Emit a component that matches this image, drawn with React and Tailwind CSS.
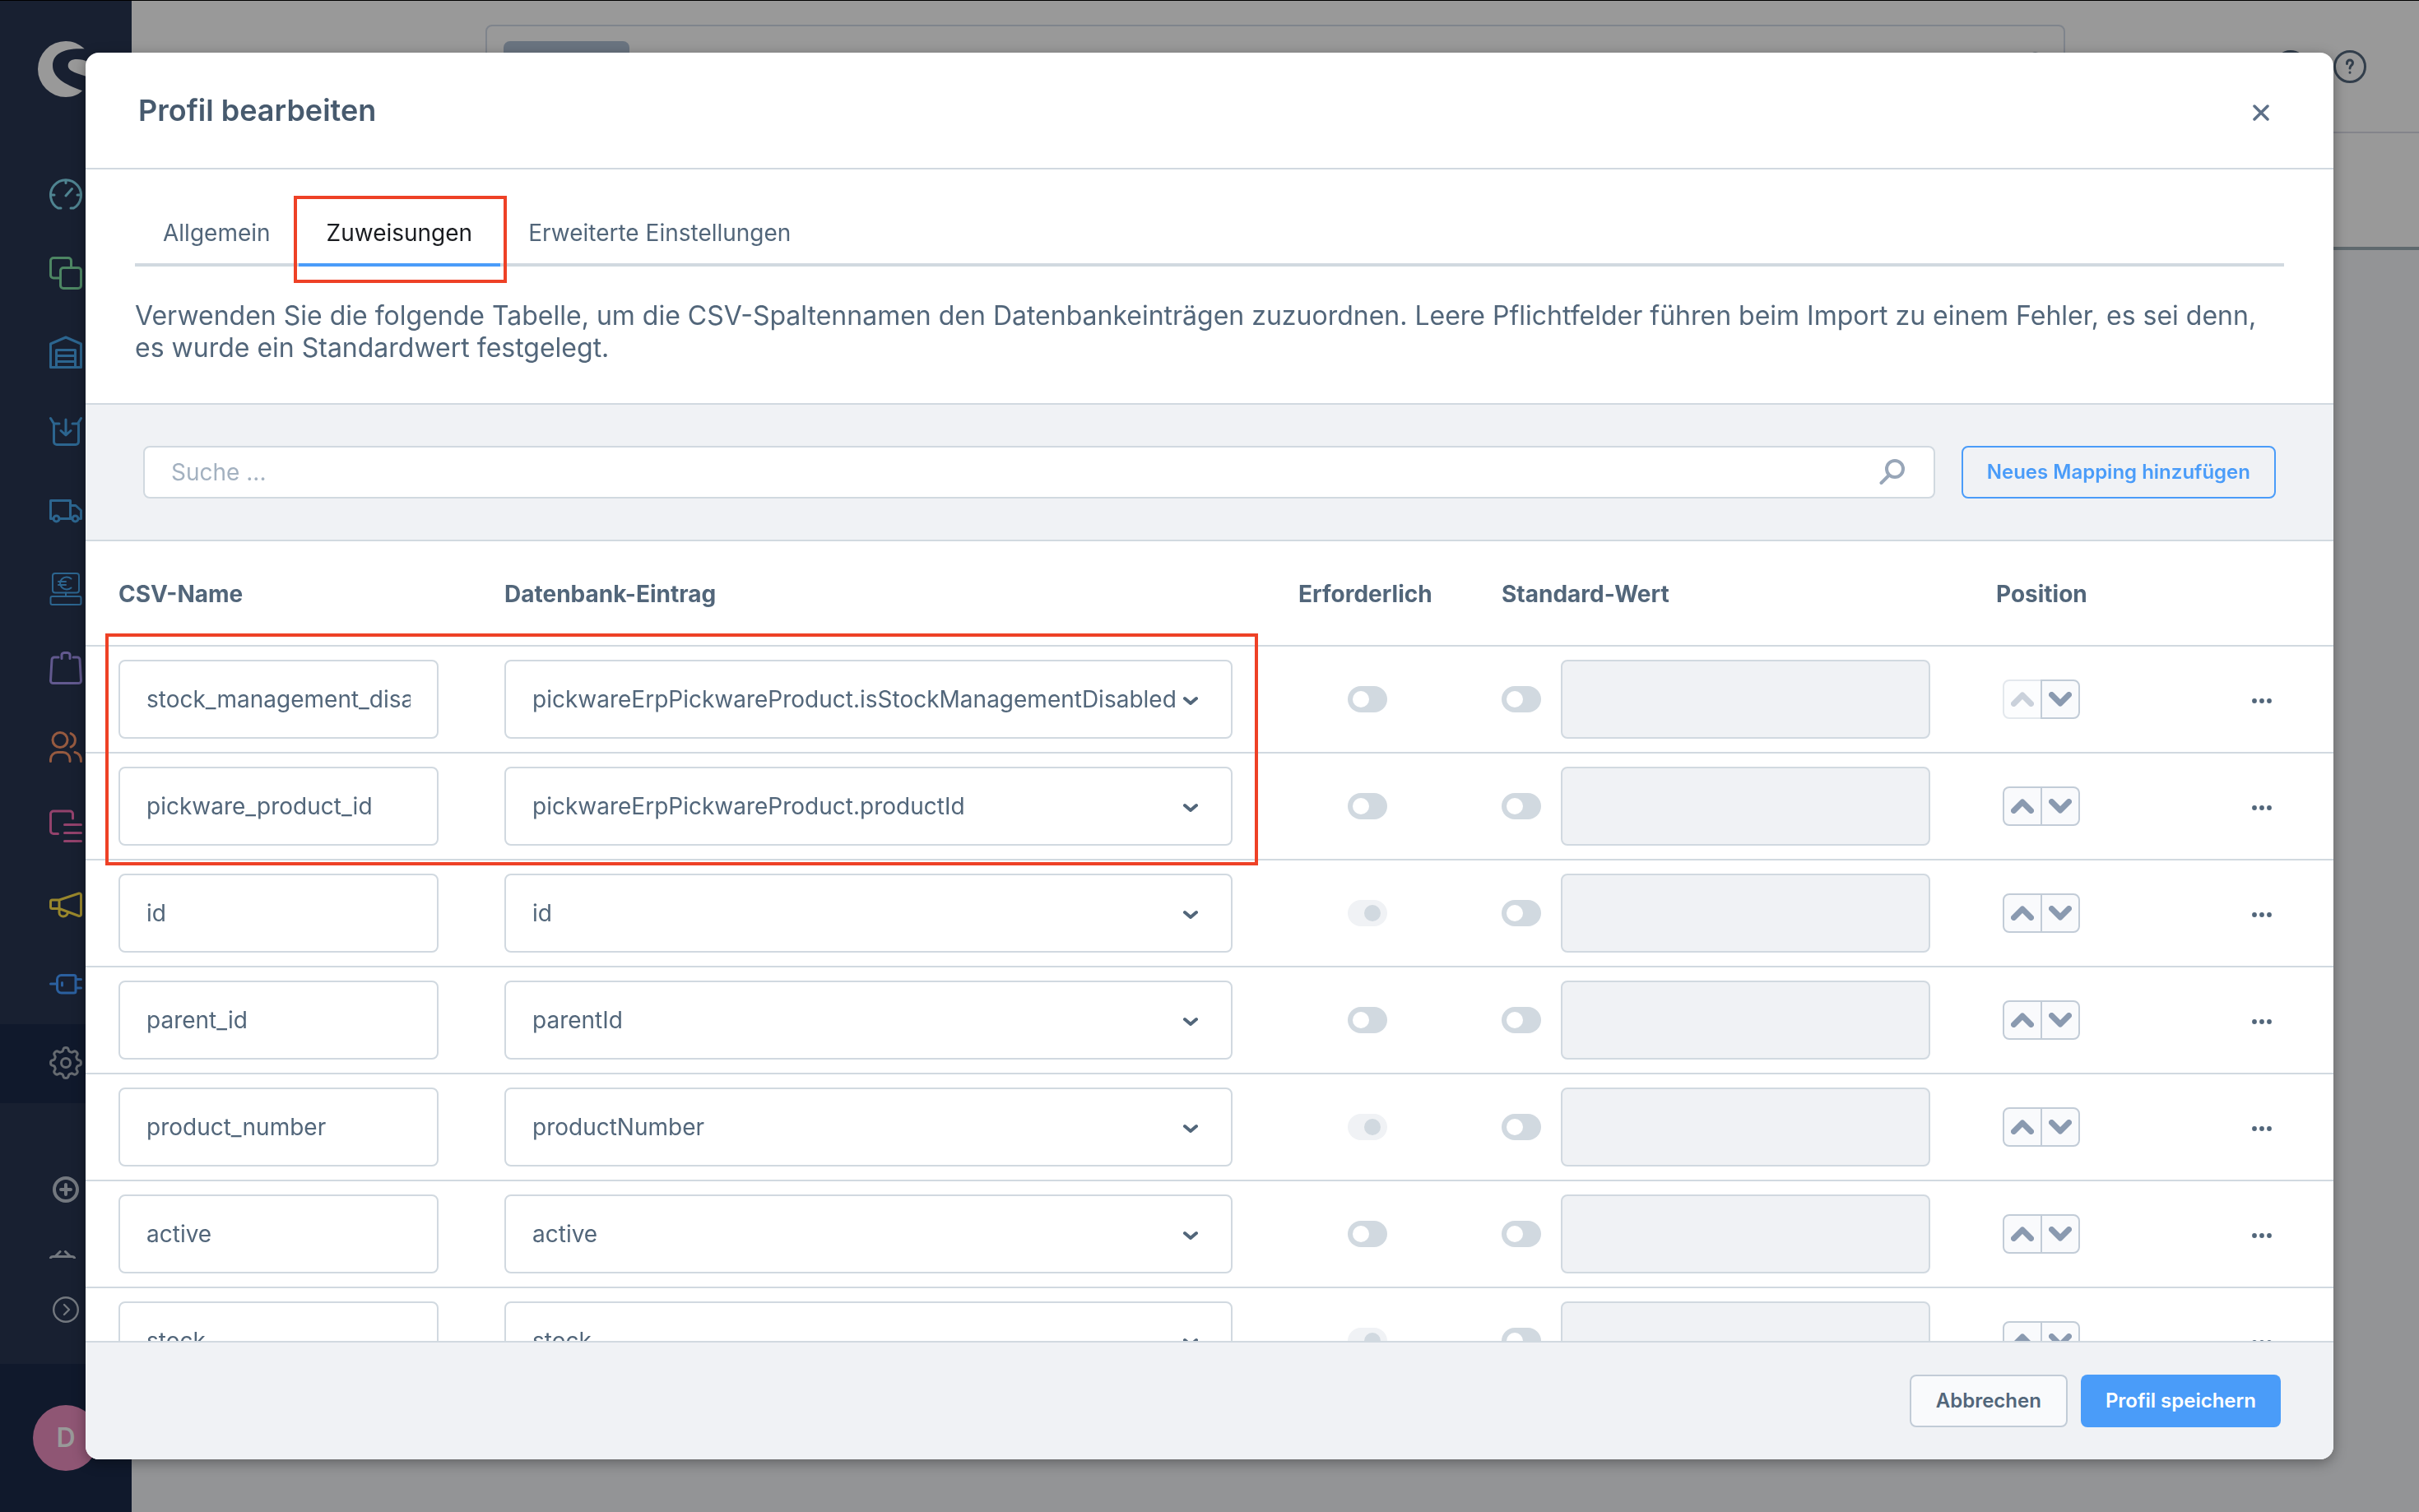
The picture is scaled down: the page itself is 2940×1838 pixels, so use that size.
import React from "react";

const rows = [
  { csv: "stock_management_disabled", db: "pickwareErpPickwareProduct.isStockManagementDisabled", required: false },
  { csv: "pickware_product_id", db: "pickwareErpPickwareProduct.productId", required: false },
  { csv: "id", db: "id", required: true },
  { csv: "parent_id", db: "parentId", required: false },
  { csv: "product_number", db: "productNumber", required: true },
  { csv: "active", db: "active", required: false },
  { csv: "stock", db: "stock", required: true },
];

// Outline of a cog with eight soft teeth, centred in a 40 by 40 box.
const gearPath =
  "M" +
  Array.from({ length: 160 }, (_, i) => {
    const a = (i / 160) * Math.PI * 2;
    const r = 16.4 + 2.1 * Math.tanh(2 * Math.cos(8 * a));
    return `${(20 + r * Math.sin(a)).toFixed(2)} ${(20 - r * Math.cos(a)).toFixed(2)}`;
  }).join("L") +
  "Z";

const navItems = [
  {
    label: "Dashboard",
    color: "text-[#4f8491]",
    icon: <path d="M14 37H10.5A18.5 18.5 0 1 1 29.5 37H26M20 3V6.5M2 21H6M34 21H38M20 22L27.5 13.5" />,
  },
  {
    label: "Kataloge",
    color: "text-[#4d8663]",
    icon: (
      <>
        <path d="M26.5 12V5A3.5 3.5 0 0 0 23 1.5H5A3.5 3.5 0 0 0 1.5 5V22.5A3.5 3.5 0 0 0 5 26H12" />
        <rect x="13.5" y="13.5" width="25" height="25" rx="3.5" />
      </>
    ),
  },
  {
    label: "Lager",
    color: "text-[#2c658f]",
    icon: <path d="M1.5 38.5V10L20 2L38.5 10V38.5ZM8.5 38.5V17.5H31.5V38.5M8.5 24.5H31.5M8.5 31.5H31.5" />,
  },
  {
    label: "Wareneingang",
    color: "text-[#2c658f]",
    icon: <path d="M1.5 4.5L5.5 11H12M38.5 4.5L34.5 11H28M5.5 11V33A3.5 3.5 0 0 0 9 36.5H32A3.5 3.5 0 0 0 35.5 33V11M20 6V24.5M14 19.5L20 25L26 19.5" />,
  },
  {
    label: "Versand",
    color: "text-[#2c658f]",
    icon: (
      <>
        <path d="M5 30.5H1.5V8.5H25.5V30.5M12 30.5H27.5M25.5 14.5H32L38.5 20.5V30.5H35.5" />
        <circle cx="8.5" cy="30.5" r="3.5" />
        <circle cx="31.5" cy="30.5" r="3.5" />
      </>
    ),
  },
  {
    label: "Kasse",
    color: "text-[#2c658f]",
    icon: (
      <g strokeWidth="2">
        <rect x="4" y="1" width="32" height="23.5" rx="3" />
        <path d="M20 24.5V29M26.5 7.5A8 7.5 0 1 0 26.5 18.5M11 11H20M11 15H20" />
        <rect x="1.5" y="29" width="37" height="10" rx="2" />
      </g>
    ),
  },
  {
    label: "Bestellungen",
    color: "text-[#62598f]",
    icon: <path d="M11 7H6A3 3 0 0 0 3 10L1.5 35.5A3 3 0 0 0 4.5 38.5H35.5A3 3 0 0 0 38.5 35.5L37 10A3 3 0 0 0 34 7H29M15 8.5V5A3 3 0 0 1 18 1.5H22A3 3 0 0 1 25 5V8.5" />,
  },
  {
    label: "Kunden",
    color: "text-[#965a40]",
    icon: (
      <>
        <circle cx="13" cy="11.5" r="9" />
        <path d="M1.5 37.5V35A8.5 8.5 0 0 1 10 26.5H16.5A8.5 8.5 0 0 1 25 35V37.5M26 3.5A9 9 0 0 1 26 20M31 26.5C36 27.5 38.5 30.5 38.5 37.5" />
      </>
    ),
  },
  {
    label: "Inhalte",
    color: "text-[#93426c]",
    icon: <path d="M10.5 29.5H5A3.5 3.5 0 0 1 1.5 26V5.5A3.5 3.5 0 0 1 5 2H25A3.5 3.5 0 0 1 28.5 5.5V11M18.5 18.5H38.5M18.5 28.5H38.5M18.5 38.5H38.5" />,
  },
  {
    label: "Marketing",
    color: "text-[#99872c]",
    icon: <path d="M12 14H3.5A2 2 0 0 0 1.5 16V22.5A2 2 0 0 0 3.5 24.5H12ZM12 14L36 6A2 2 0 0 1 38.5 8V31.5A2 2 0 0 1 36 33.5L12 24.5M12 24.5V29.5C12 35 21 36 22.5 29" />,
  },
  {
    label: "Erweiterungen",
    color: "text-[#2b609f]",
    icon: <path d="M1.5 20H9.5M14.5 9.5H30A2 2 0 0 1 32 11.5V29A2 2 0 0 1 30 31H14.5A5 5 0 0 1 9.5 26V14.5A5 5 0 0 1 14.5 9.5ZM15.5 18.5V22M32 14.5H38.5M32 25H38.5" />,
  },
  {
    label: "Einstellungen",
    color: "text-[#666b71]",
    active: true,
    icon: (
      <>
        <path d={gearPath} />
        <circle cx="20" cy="20" r="5.5" />
      </>
    ),
  },
];

function Icon({ children, className = "size-10" }) {
  return (
    <svg
      viewBox="0 0 40 40"
      className={className}
      fill="none"
      stroke="currentColor"
      strokeWidth="3"
      strokeLinecap="round"
      strokeLinejoin="round"
      aria-hidden="true"
    >
      {children}
    </svg>
  );
}

function Sidebar() {
  return (
    <aside className="flex w-40 shrink-0 flex-col bg-[#182031]">
      <div className="flex pt-[49px] pl-[46px]">
        <svg viewBox="0 0 68 68" className="size-[68px]" fill="#999999" aria-hidden="true">
          <path d="M56.7 9.3C50 3.2 42 0 34 0A34 34 0 1 0 34 68C42 68 49 65.5 54 60.3C32 52.5 18 44 18 29.5C18 15 32 8 56.7 9.3Z" />
          <path d="M36.7 30C36.7 24.5 41 22 47.3 22C57 22 66 26 68 36L64 45C52 39.5 37 38 36.7 30Z" />
        </svg>
      </div>
      <nav className="mt-[71px] flex flex-col" aria-label="Hauptnavigation">
        {navItems.map((item) => (
          <a
            key={item.label}
            href="#"
            aria-label={item.label}
            className={`flex h-24 items-center justify-center pb-0.5 ${item.color} ${item.active ? "bg-[#10192c]" : ""}`}
          >
            <Icon>{item.icon}</Icon>
          </a>
        ))}
      </nav>
      <div className="mt-[68px] flex flex-col text-[#73787f]">
        <button type="button" aria-label="Hinzufügen" className="flex h-[73px] items-center justify-center">
          <Icon className="size-8">
            <g strokeWidth="5">
              <circle cx="20" cy="20" r="17.5" />
              <path d="M20 12.5V27.5M12.5 20H27.5" />
            </g>
          </Icon>
        </button>
        <button type="button" aria-label="Feedback" className="flex h-[73px] items-center pt-3 pl-[60px]">
          <svg viewBox="0 0 32 10" className="h-2.5 w-8" fill="none" stroke="currentColor" strokeWidth="3" strokeLinecap="round" aria-hidden="true">
            <path d="M1.5 9C2 8 3 7.5 4.5 7.5H27.5C29 7.5 30 8 30.5 9M7.5 7L13 1.5M25 7L19.5 1.5" />
          </svg>
        </button>
        <button type="button" aria-label="Menü ausklappen" className="flex h-[73px] items-center justify-center">
          <Icon className="size-8">
            <circle cx="20" cy="20" r="18.5" />
            <path d="M17.5 12.5L25 20L17.5 27.5" />
          </Icon>
        </button>
      </div>
      <div className="mt-auto flex h-[180px] items-center justify-center bg-[#10192c]">
        <div className="flex size-20 items-center justify-center rounded-full bg-[#8f5674] text-[32px] font-semibold text-[#999999]">D</div>
      </div>
    </aside>
  );
}

function PageBehind() {
  return (
    <div className="flex min-w-0 flex-1 flex-col bg-[#939496]">
      <header className="flex h-[161px] items-center border-b-2 border-[#83848b] bg-[#999999] pr-16 pl-[430px] text-[#323e4b]">
        <div className="mr-[254px] flex h-[102px] flex-1 items-center justify-between rounded-lg border-2 border-[#7f848c] px-5">
          <div className="h-[62px] w-[153px] rounded-lg bg-[#6a7480]" />
          <Icon className="size-9">
            <circle cx="24" cy="13" r="11" />
            <path d="M16 21L4 34" />
          </Icon>
        </div>
        <div className="flex gap-8">
          <Icon>
            <circle cx="20" cy="20" r="18.5" />
          </Icon>
          <Icon>
            <circle cx="20" cy="20" r="18.5" />
            <path d="M16.5 16.5V15.5A3.5 3.5 0 0 1 23.5 15.5C23.5 18.5 20 18.5 20 22M20 27V27.3" />
          </Icon>
        </div>
      </header>
      <div className="h-[142px] border-b-4 border-[#5f696e] bg-[#999999]" />
    </div>
  );
}

function Toggle({ label, locked = false }) {
  return (
    <input
      type="checkbox"
      aria-label={label}
      defaultChecked={locked}
      disabled={locked}
      className="flex h-8 w-12 shrink-0 appearance-none items-center rounded-full bg-[#d1d9e0] pr-2 pl-1.5 before:block before:size-5 before:rounded-full before:bg-white checked:justify-end disabled:bg-[#f0f2f5] disabled:before:bg-[#d1d9e0]"
    />
  );
}

function Chevron({ up = false }) {
  return (
    <svg viewBox="0 0 28 18" className="h-[18px] w-7" fill="none" stroke="#8a9ab0" strokeWidth="7" strokeLinecap="round" strokeLinejoin="round" aria-hidden="true">
      <path d={up ? "M3.5 14.5L14 4L24.5 14.5" : "M3.5 3.5L14 14L24.5 3.5"} />
    </svg>
  );
}

function MappingRow({ row, first }) {
  const cell = "border-b-2 border-[#d1d9e0] py-4";
  return (
    <tr>
      <td className={`${cell} px-10`}>
        <input
          type="text"
          aria-label={`CSV-Name ${row.csv}`}
          defaultValue={row.csv}
          className="block h-24 w-full rounded-lg border-2 border-[#d1d9e0] px-8 text-[28px] text-[#52667a]"
        />
      </td>
      <td className={`${cell} px-10`}>
        <div className="relative">
          <select
            aria-label={`Datenbank-Eintrag ${row.db}`}
            defaultValue={row.db}
            className="block h-24 w-full appearance-none rounded-lg border-2 border-[#d1d9e0] bg-white px-8 text-[28px] text-[#52667a]"
          >
            <option>{row.db}</option>
          </select>
          <svg viewBox="0 0 18 14" className="pointer-events-none absolute top-1/2 right-[42px] h-3.5 w-[18px] -translate-y-1/2" fill="none" stroke="#52667a" strokeWidth="4" strokeLinecap="round" strokeLinejoin="round" aria-hidden="true">
            <path d="M2 6L9 12L16 6" />
          </svg>
        </div>
      </td>
      <td className={cell}>
        <div className="flex justify-center">
          <Toggle label={`Erforderlich ${row.csv}`} locked={row.required} />
        </div>
      </td>
      <td className={`${cell} px-10`}>
        <div className="flex items-center gap-6">
          <Toggle label={`Standard-Wert verwenden ${row.csv}`} />
          <input
            type="text"
            disabled
            aria-label={`Standard-Wert ${row.csv}`}
            className="block h-24 min-w-0 flex-1 rounded-lg border-2 border-[#d1d9e0] bg-[#f0f2f5] px-8 text-[28px]"
          />
        </div>
      </td>
      <td className={`${cell} pl-12`}>
        <div className="flex">
          <button
            type="button"
            aria-label="Nach oben"
            disabled={first}
            className="flex size-12 items-center justify-center rounded-l-lg border-2 border-[#c2ccd7] bg-[#f9fafc] disabled:opacity-45"
          >
            <Chevron up />
          </button>
          <button
            type="button"
            aria-label="Nach unten"
            className="-ml-0.5 flex size-12 items-center justify-center rounded-r-lg border-2 border-[#c2ccd7] bg-[#f9fafc]"
          >
            <Chevron />
          </button>
        </div>
      </td>
      <td className={cell}>
        <button type="button" aria-label="Aktionen" className="mx-auto flex h-12 w-12 items-center justify-center pt-1">
          <svg viewBox="0 0 24 6" className="h-1.5 w-6" fill="#52667a" aria-hidden="true">
            <circle cx="3" cy="3" r="2.9" />
            <circle cx="12" cy="3" r="2.9" />
            <circle cx="21" cy="3" r="2.9" />
          </svg>
        </button>
      </td>
    </tr>
  );
}

function MappingTable() {
  const head = "h-32 border-b-2 border-[#d1d9e0] px-10 pt-0.5 text-left text-[28px] font-bold";
  return (
    <div className="relative">
      <table className="w-full table-fixed border-separate border-spacing-0">
        <colgroup>
          <col className="w-[469px]" />
          <col />
          <col className="w-[247px]" />
          <col className="w-[601px]" />
          <col className="w-[276px]" />
          <col className="w-[174px]" />
        </colgroup>
        <thead>
          <tr>
            <th className={head}>CSV-Name</th>
            <th className={head}>Datenbank-Eintrag</th>
            <th className={head}>Erforderlich</th>
            <th className={head}>Standard-Wert</th>
            <th className={head}>Position</th>
            <th className={head} aria-label="Aktionen" />
          </tr>
        </thead>
        <tbody>
          {rows.map((row, i) => (
            <MappingRow key={row.csv} row={row} first={i === 0} />
          ))}
        </tbody>
      </table>
      <div className="pointer-events-none absolute top-28 left-6 h-[282px] w-[1401px] border-4 border-[#ee4126]" />
    </div>
  );
}

function ProfileModal() {
  const tab = "relative -mb-1 h-20 border-b-4 px-[34px] pt-0.5 text-[28px]";
  return (
    <section
      role="dialog"
      aria-label="Profil bearbeiten"
      className="flex min-w-0 flex-1 flex-col overflow-hidden rounded-2xl bg-white text-[#52667a] shadow-[0_4px_16px_rgba(0,0,0,0.35)]"
    >
      <header className="flex h-[142px] shrink-0 items-center justify-between border-b-2 border-[#d1d9e0] px-16">
        <h1 className="text-4xl font-semibold text-[#475a6e]">Profil bearbeiten</h1>
        <button type="button" aria-label="Schließen" className="flex size-12 items-center justify-center pt-1.5">
          <svg viewBox="0 0 20 20" className="size-5" stroke="#5d7088" strokeWidth="3.5" strokeLinecap="round" aria-hidden="true">
            <path d="M2 2L18 18M18 2L2 18" />
          </svg>
        </button>
      </header>
      <div className="min-h-0 flex-1 overflow-hidden">
        <div className="px-[60px] pt-[38px] pb-12">
          <div role="tablist" className="flex border-b-4 border-[#d1d9e0]">
            <button type="button" role="tab" aria-selected="false" className={`${tab} border-transparent`}>
              Allgemein
            </button>
            <button type="button" role="tab" aria-selected="true" className={`${tab} border-[#4a9cf9] text-[#1a1c20]`}>
              Zuweisungen
              <span className="pointer-events-none absolute -top-1.5 -right-2 -bottom-6 -left-1.5 border-4 border-[#ee4126]" />
            </button>
            <button type="button" role="tab" aria-selected="false" className={`${tab} border-transparent`}>
              Erweiterte Einstellungen
            </button>
          </div>
          <p className="mt-10 text-[32px] leading-[39px]">
            Verwenden Sie die folgende Tabelle, um die CSV-Spaltennamen den Datenbankeinträgen zuzuordnen. Leere
            Pflichtfelder führen beim Import zu einem Fehler, es sei denn, es wurde ein Standardwert festgelegt.
          </p>
        </div>
        <div className="flex items-center gap-8 border-y-2 border-[#d1d9e0] bg-[#f0f2f5] px-[70px] py-[50px]">
          <div className="relative flex-1">
            <input
              type="search"
              aria-label="Suche"
              placeholder="Suche ..."
              className="block h-16 w-full rounded-lg border-2 border-[#d1d9e0] bg-white pr-24 pl-8 text-[28px] placeholder:text-[#a3b1c0]"
            />
            <svg viewBox="0 0 32 32" className="absolute top-4 right-9 size-8" fill="none" stroke="#98a6b8" strokeWidth="4" strokeLinecap="round" aria-hidden="true">
              <circle cx="19" cy="12" r="10" />
              <path d="M11.5 20L2.5 29" />
            </svg>
          </div>
          <button type="button" className="h-16 rounded-lg border-2 border-[#4a9cf9] px-[29px] text-2xl font-semibold text-[#4a9cf9]">
            Neues Mapping hinzufügen
          </button>
        </div>
        <MappingTable />
      </div>
      <footer className="flex shrink-0 items-center justify-end gap-4 border-t-2 border-[#d1d9e0] bg-[#f0f2f5] px-16 py-[39px]">
        <button type="button" className="h-16 rounded-lg border-2 border-[#c2ccd7] bg-[#f9fafc] px-[30px] text-2xl font-semibold">
          Abbrechen
        </button>
        <button type="button" className="h-16 rounded-lg bg-[#4a9cf9] px-[30px] text-2xl font-semibold text-white">
          Profil speichern
        </button>
      </footer>
    </section>
  );
}

export default function App() {
  return (
    <div className="relative flex h-screen overflow-hidden border-t border-black font-['Inter',sans-serif]">
      <Sidebar />
      <PageBehind />
      <div className="fixed inset-0 flex px-[104px] py-16">
        <ProfileModal />
      </div>
    </div>
  );
}
